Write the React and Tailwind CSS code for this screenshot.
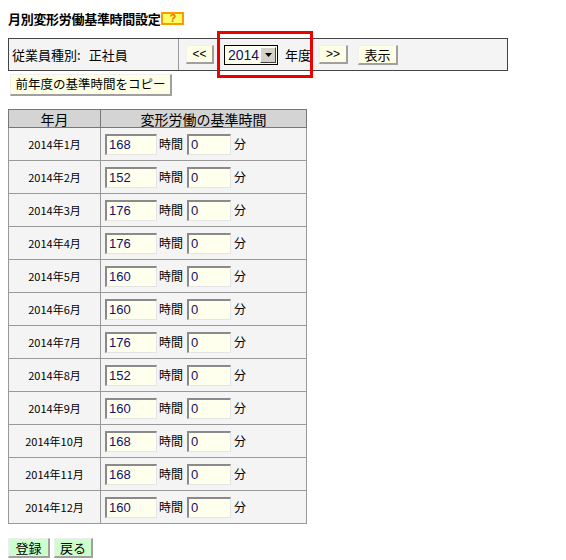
import React from "react";

const rows = [
  ["2014年1月", "168"],
  ["2014年2月", "152"],
  ["2014年3月", "176"],
  ["2014年4月", "176"],
  ["2014年5月", "160"],
  ["2014年6月", "160"],
  ["2014年7月", "176"],
  ["2014年8月", "152"],
  ["2014年9月", "160"],
  ["2014年10月", "168"],
  ["2014年11月", "168"],
  ["2014年12月", "160"],
];

const jp = "font-['Noto_Sans_CJK_JP','Liberation_Sans',sans-serif]";

function Btn({ children, className = "" }) {
  return (
    <button
      className={`flex items-center justify-center border-t border-l border-t-[#f0f0f0] border-l-[#f0f0f0] border-r-2 border-b-2 border-r-[#a0a0a0] border-b-[#a0a0a0] bg-[#ffffe6] leading-none text-black ${className}`}
    >
      {children}
    </button>
  );
}

function TextBox({ value, w }) {
  return (
    <div
      className={`${w} h-[21px] flex items-center border-t-2 border-l-2 border-t-[#8a8a8a] border-l-[#8a8a8a] border-r border-b border-r-[#e4e4e4] border-b-[#e4e4e4] bg-[#ffffee] pl-[2px] font-['Liberation_Sans',sans-serif] text-[13px] text-[#101070] leading-none`}
    >
      {value}
    </div>
  );
}

export default function App() {
  return (
    <div className={`relative w-[566px] h-[560px] bg-white ${jp} text-black`}>
      <div className="pl-[8px] pt-[11px] flex flex-col">
        <div className="h-[15px] flex items-center">
          <span className="text-[13px] font-bold leading-none tracking-[-0.3px]">
            月別変形労働基準時間設定
          </span>
          <span className="ml-[1px] h-[13px] w-[23px] flex items-center justify-center border-2 border-[#ff9900] bg-[#ffff66] text-[11px] font-bold text-[#ee6600] leading-none font-['Liberation_Sans',sans-serif]">
            ?
          </span>
        </div>

        <div className="mt-[12px] w-[500px] h-[33px] flex border border-[#444] bg-[#f4f4f4]">
          <div className="w-[170px] border-r border-[#999] flex items-center pl-[3px] text-[13px] leading-none">
            <span>従業員種別:</span>
            <span className="ml-[8px]">正社員</span>
          </div>
          <div className="flex items-center pl-[7px]">
            <Btn className="w-[28px] h-[19px] text-[12px] font-['Liberation_Sans',sans-serif] text-[#202080]">
              &lt;&lt;
            </Btn>
            <div className="ml-[10px] w-[54px] h-[20px] flex border border-black bg-[#ffffee]">
              <div className="flex-1 flex items-center pl-[3px] font-['Liberation_Sans',sans-serif] text-[14px] text-[#101070] leading-none">
                2014
              </div>
              <div className="w-[16px] m-[1px] flex items-center justify-center bg-[#d4d0c8] border-t border-l border-t-white border-l-white border-r border-b border-r-[#404040] border-b-[#404040]">
                <svg width="7" height="4" viewBox="0 0 7 4">
                  <polygon points="0,0 7,0 3.5,4" fill="#000" />
                </svg>
              </div>
            </div>
            <span className="ml-[7px] text-[13px] leading-none">年度</span>
            <Btn className="ml-[8px] w-[29px] h-[19px] text-[12px] font-['Liberation_Sans',sans-serif] text-[#202080]">
              &gt;&gt;
            </Btn>
            <Btn className="ml-[10px] w-[40px] h-[20px] text-[13px]">表示</Btn>
          </div>
        </div>

        <Btn className="mt-[3px] ml-[2px] w-[162px] h-[22px] text-[12.5px]">
          前年度の基準時間をコピー
        </Btn>

        <table className="mt-[13px] w-[299px] border-collapse border border-[#444] bg-[#f4f4f4]">
          <thead>
            <tr className="h-[18px] bg-[#d4d4d4]">
              <th className="w-[92px] border border-[#777] font-normal text-[14px] leading-none p-0">
                年月
              </th>
              <th className="border border-[#777] font-normal text-[14px] leading-none p-0">
                変形労働の基準時間
              </th>
            </tr>
          </thead>
          <tbody>
            {rows.map(([m, h]) => (
              <tr key={m} className="h-[33px]">
                <td className="border border-[#999] text-center text-[11px] leading-none p-0">
                  {m}
                </td>
                <td className="border border-[#999] p-0 pl-[4px]">
                  <div className="flex items-center">
                    <TextBox value={h} w="w-[52px]" />
                    <span className="ml-[2px] text-[12px] leading-none">時間</span>
                    <span className="ml-[4px]">
                      <TextBox value="0" w="w-[44px]" />
                    </span>
                    <span className="ml-[3px] text-[12px] leading-none">分</span>
                  </div>
                </td>
              </tr>
            ))}
          </tbody>
        </table>

        <div className="mt-[14px] flex gap-[4px]">
          <button className="w-[42px] h-[20px] flex items-center justify-center bg-[#ccffcc] border-t border-l border-t-[#eeeeee] border-l-[#eeeeee] border-r-2 border-b-2 border-r-[#a0a0a0] border-b-[#a0a0a0] text-[13px] leading-none">
            登録
          </button>
          <button className="w-[39px] h-[20px] flex items-center justify-center bg-[#ccffcc] border-t border-l border-t-[#eeeeee] border-l-[#eeeeee] border-r-2 border-b-2 border-r-[#a0a0a0] border-b-[#a0a0a0] text-[13px] leading-none">
            戻る
          </button>
        </div>
      </div>

      <div className="absolute left-[217px] top-[31px] w-[96px] h-[47px] border-[3px] border-[#ee0000] pointer-events-none" />
    </div>
  );
}
